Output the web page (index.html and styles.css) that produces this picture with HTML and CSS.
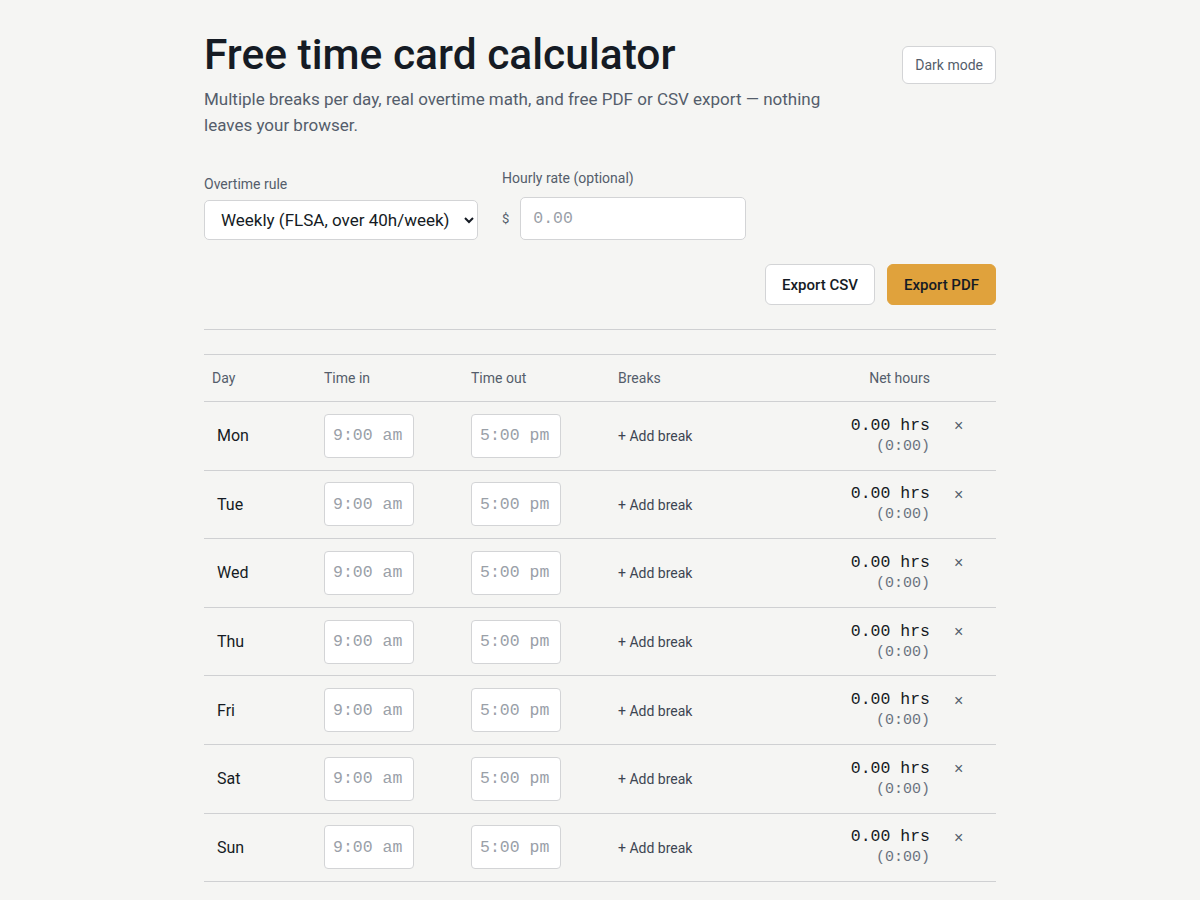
FILE: index.html
```html
<!DOCTYPE html>
<html lang="en">
<head>
<meta charset="utf-8">
<title>Free time card calculator</title>
<link rel="stylesheet" href="styles.css">
</head>
<body>
<main class="page">
  <header class="head">
    <div class="head-text">
      <h1 class="title">Free time card calculator</h1>
      <p class="lede">Multiple breaks per day, real overtime math, and free PDF or CSV export — nothing leaves your browser.</p>
    </div>
    <button class="btn btn-ghost">Dark mode</button>
  </header>

  <section class="controls">
    <label class="field">
      <span class="field-label">Overtime rule</span>
      <select class="select">
        <option>Weekly (FLSA, over 40h/week)</option>
      </select>
    </label>
    <div class="field">
      <span class="field-label label-rate">Hourly rate (optional)</span>
      <div class="rate">
        <span class="dollar">$</span>
        <input class="rate-input" type="text" placeholder="0.00">
      </div>
    </div>
  </section>

  <div class="actions">
    <button class="btn btn-outline">Export CSV</button>
    <button class="btn btn-primary">Export PDF</button>
  </div>

  <hr class="rule">

  <table class="sheet">
    <thead>
      <tr>
        <th class="c-day">Day</th>
        <th class="c-in">Time in</th>
        <th class="c-out">Time out</th>
        <th class="c-breaks">Breaks</th>
        <th class="c-net">Net hours</th>
        <th class="c-x"></th>
      </tr>
    </thead>
    <tbody>
      <tr><td class="c-day">Mon</td><td><input class="time" placeholder="9:00 am"></td><td><input class="time" placeholder="5:00 pm"></td><td><button class="add">+ Add break</button></td><td class="c-net"><div class="hrs">0.00 hrs</div><div class="hm">(0:00)</div></td><td class="c-x"><button class="x">×</button></td></tr>
      <tr><td class="c-day">Tue</td><td><input class="time" placeholder="9:00 am"></td><td><input class="time" placeholder="5:00 pm"></td><td><button class="add">+ Add break</button></td><td class="c-net"><div class="hrs">0.00 hrs</div><div class="hm">(0:00)</div></td><td class="c-x"><button class="x">×</button></td></tr>
      <tr><td class="c-day">Wed</td><td><input class="time" placeholder="9:00 am"></td><td><input class="time" placeholder="5:00 pm"></td><td><button class="add">+ Add break</button></td><td class="c-net"><div class="hrs">0.00 hrs</div><div class="hm">(0:00)</div></td><td class="c-x"><button class="x">×</button></td></tr>
      <tr><td class="c-day">Thu</td><td><input class="time" placeholder="9:00 am"></td><td><input class="time" placeholder="5:00 pm"></td><td><button class="add">+ Add break</button></td><td class="c-net"><div class="hrs">0.00 hrs</div><div class="hm">(0:00)</div></td><td class="c-x"><button class="x">×</button></td></tr>
      <tr><td class="c-day">Fri</td><td><input class="time" placeholder="9:00 am"></td><td><input class="time" placeholder="5:00 pm"></td><td><button class="add">+ Add break</button></td><td class="c-net"><div class="hrs">0.00 hrs</div><div class="hm">(0:00)</div></td><td class="c-x"><button class="x">×</button></td></tr>
      <tr><td class="c-day">Sat</td><td><input class="time" placeholder="9:00 am"></td><td><input class="time" placeholder="5:00 pm"></td><td><button class="add">+ Add break</button></td><td class="c-net"><div class="hrs">0.00 hrs</div><div class="hm">(0:00)</div></td><td class="c-x"><button class="x">×</button></td></tr>
      <tr><td class="c-day">Sun</td><td><input class="time" placeholder="9:00 am"></td><td><input class="time" placeholder="5:00 pm"></td><td><button class="add">+ Add break</button></td><td class="c-net"><div class="hrs">0.00 hrs</div><div class="hm">(0:00)</div></td><td class="c-x"><button class="x">×</button></td></tr>
    </tbody>
  </table>
</main>
</body>
</html>
```

FILE: styles.css
```css
* { box-sizing: border-box; }
html, body { margin: 0; padding: 0; }
body {
  background: #f5f5f3;
  color: #141a22;
  font-family: Roboto, "Noto Sans", sans-serif;
}
.page {
  width: 792px;
  margin: 0 auto;
  padding-top: 28px;
}
.head {
  display: flex;
  justify-content: space-between;
  align-items: flex-start;
}
.head-text { width: 630px; }
.title {
  margin: 0;
  font-size: 42.5px;
  font-weight: 500;
  line-height: 54px;
  letter-spacing: 0;
  color: #151b24;
}
.lede {
  margin: 4px 0 0;
  font-size: 17px;
  line-height: 26px;
  color: #545d6b;
}
.btn {
  font-family: inherit;
  cursor: pointer;
  border-radius: 6px;
}
.btn-ghost {
  margin-top: 18px;
  height: 38px;
  padding: 0 12px;
  background: #fff;
  border: 1px solid #d3d4d6;
  color: #545d6b;
  font-size: 14px;
}
.controls {
  display: flex;
  align-items: flex-end;
  gap: 24px;
  margin-top: 32px;
}
.field {
  display: flex;
  flex-direction: column;
}
.field-label {
  font-size: 14px;
  color: #545d6b;
  margin-bottom: 8px;
}
.label-rate { margin-bottom: 11px; }
.select {
  width: 274px;
  height: 40px;
  padding: 0 12px;
  font-family: inherit;
  font-size: 17px;
  color: #151b24;
  background: #fff;
  border: 1px solid #d3d4d6;
  border-radius: 5px;
}
.rate {
  display: flex;
  align-items: center;
  gap: 11px;
}
.dollar { font-size: 13px; color: #545d6b; }
.rate-input {
  width: 226px;
  height: 43px;
  padding: 0 12px;
  background: #fff;
  border: 1px solid #d3d4d6;
  border-radius: 5px;
  font-family: "Liberation Mono", monospace;
  font-size: 16.5px;
}
.rate-input::placeholder, .time::placeholder { color: #9aa0a8; }
.actions {
  display: flex;
  justify-content: flex-end;
  gap: 12px;
  margin-top: 24px;
}
.btn-outline, .btn-primary {
  height: 41px;
  padding: 0 16px;
  font-size: 15px;
  font-weight: 500;
  color: #151b24;
}
.btn-outline { background: #fff; border: 1px solid #d3d4d6; }
.btn-primary { background: #e0a23c; border: 1px solid #e0a23c; }
.rule {
  border: 0;
  border-top: 1px solid #cfd0d2;
  margin: 24px 0 24px;
}
.sheet {
  width: 100%;
  border-collapse: collapse;
  border-top: 1px solid #cfd0d2;
}
.sheet th {
  height: 47px;
  text-align: left;
  font-weight: 400;
  font-size: 14px;
  color: #545d6b;
  padding: 0 8px;
  border-bottom: 1px solid #cfd0d2;
}
.sheet td {
  height: 68.6px;
  padding: 0 8px;
  border-bottom: 1px solid #cfd0d2;
  vertical-align: middle;
}
.sheet th.c-day { width: 112px; }
.sheet th.c-in, .sheet th.c-out { width: 147px; }
.sheet th.c-x { width: 58px; }
.sheet .c-net { text-align: right; }
td.c-day { padding-left: 13px; font-size: 16px; color: #151b24; }
.time {
  width: 90px;
  height: 44px;
  padding: 0 8px;
  background: #fff;
  border: 1px solid #d3d4d6;
  border-radius: 4px;
  font-family: "Liberation Mono", monospace;
  font-size: 16.5px;
}
.add {
  background: none;
  border: 0;
  padding: 0;
  font-family: inherit;
  font-size: 14px;
  color: #3d4552;
  cursor: pointer;
}
.hrs {
  font-family: "Liberation Mono", monospace;
  font-size: 16.5px;
  line-height: 22px;
  color: #151b24;
}
.hm {
  font-family: "Liberation Mono", monospace;
  font-size: 15px;
  line-height: 20px;
  color: #6b7280;
}
td.c-x { vertical-align: middle; padding-left: 16px; }
.x {
  background: none;
  border: 0;
  padding: 0;
  font-size: 16px;
  color: #545d6b;
  position: relative;
  top: -10px;
  cursor: pointer;
}
```
